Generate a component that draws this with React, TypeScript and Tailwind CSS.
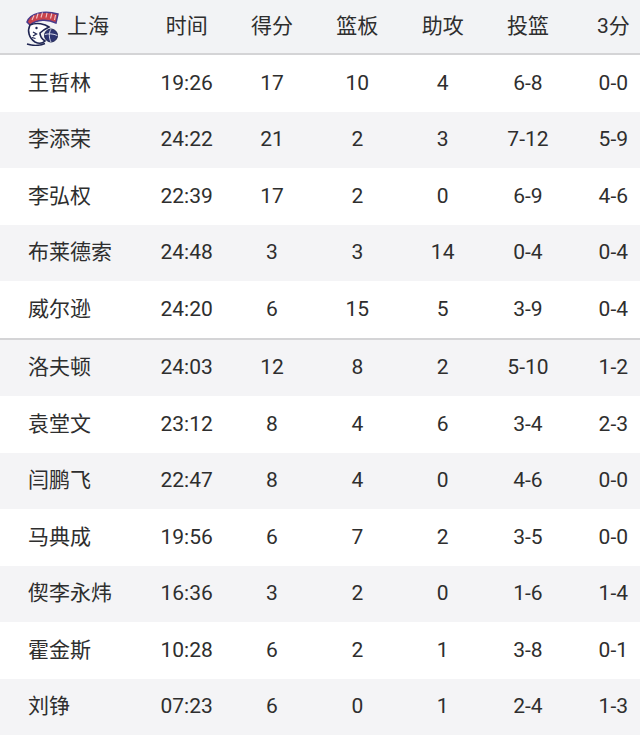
import React from "react";

type Row = [string, string, string, string, string, string, string];

const STARTERS: Row[] = [
  ["王哲林", "19:26", "17", "10", "4", "6-8", "0-0"],
  ["李添荣", "24:22", "21", "2", "3", "7-12", "5-9"],
  ["李弘权", "22:39", "17", "2", "0", "6-9", "4-6"],
  ["布莱德索", "24:48", "3", "3", "14", "0-4", "0-4"],
  ["威尔逊", "24:20", "6", "15", "5", "3-9", "0-4"],
];

const BENCH: Row[] = [
  ["洛夫顿", "24:03", "12", "8", "2", "5-10", "1-2"],
  ["袁堂文", "23:12", "8", "4", "6", "3-4", "2-3"],
  ["闫鹏飞", "22:47", "8", "4", "0", "4-6", "0-0"],
  ["马典成", "19:56", "6", "7", "2", "3-5", "0-0"],
  ["偰李永炜", "16:36", "3", "2", "0", "1-6", "1-4"],
  ["霍金斯", "10:28", "6", "2", "1", "3-8", "0-1"],
  ["刘铮", "07:23", "6", "0", "1", "2-4", "1-3"],
];

const HEADERS = ["时间", "得分", "篮板", "助攻", "投篮", "3分"];

const GRID = "grid grid-cols-[144px_repeat(6,85.33px)] w-[656px] items-center";

// Shanghai Sharks badge, rough drawing
function SharksLogo() {
  return (
    <svg width="36" height="38" viewBox="0 0 36 38">
      {/* red wordmark arc */}
      <path d="M3 14 C6 5 20 2 34 6 L32 15 C24 11 13 11 6 17 Z" fill="#c9434c" stroke="#4a3c8c" strokeWidth="1.5" />
      <path d="M8 12 L10 7.5 M12.5 10.5 L14 5.5 M17 9.5 L18.5 4.5 M22 9.5 L23 4.8 M26.5 10.5 L27.8 5.5 M30.5 12 L31.5 7" stroke="#f0c8cc" strokeWidth="1.1" />
      {/* shark head */}
      <path d="M6 17 C3 23 5 30 11 34 C15 36 19 35 21 33 C18 31 16 28 16 25 C18 23 21 21 25 19 C21 16 13 14 6 17 Z" fill="#ffffff" stroke="#1f2552" strokeWidth="1.6" />
      <path d="M9 24 L12.5 26 L9 28 M8 29.5 L11.5 30.5" stroke="#1f2552" strokeWidth="1.3" fill="none" />
      <circle cx="12.5" cy="20" r="1.2" fill="#1f2552" />
      {/* basketball */}
      <circle cx="27" cy="27.5" r="6.5" fill="#2d3470" stroke="#1f2552" strokeWidth="1" />
      <path d="M20.8 26.5 C24.5 25.5 29 25.5 33.3 27.5 M27 21.2 C24.8 24.5 24.8 30 27 34" stroke="#e8eaf5" strokeWidth="0.9" fill="none" />
      <path d="M3 36 C9 38 15 38 21 35.5" stroke="#1f2552" strokeWidth="1.4" fill="none" />
    </svg>
  );
}

function StatRow({ row, shaded }: { row: Row; shaded: boolean }) {
  return (
    <div className={`${GRID} h-[56.5px] ${shaded ? "bg-[#f4f4f6]" : "bg-white"}`}>
      <div className="pl-[28px]">{row[0]}</div>
      {row.slice(1).map((v, i) => (
        <div key={i} className="text-center">
          {v}
        </div>
      ))}
    </div>
  );
}

export default function App() {
  return (
    <div
      className="w-[640px] h-[744px] overflow-hidden bg-white text-[21px] text-[#2e2e2e] leading-none"
      style={{ fontFamily: 'Roboto, "Noto Sans CJK SC", sans-serif' }}
    >
      {/* Header */}
      <div className={`${GRID} h-[53px] bg-[#f2f3f5]`}>
        <div className="flex items-center gap-[7px] pl-[24px]">
          <SharksLogo />
          <span>上海</span>
        </div>
        {HEADERS.map((h) => (
          <div key={h} className="text-center">
            {h}
          </div>
        ))}
      </div>
      <div className="h-[2px] w-full bg-[#d4d4d6]" />

      {STARTERS.map((r, i) => (
        <StatRow key={r[0]} row={r} shaded={i % 2 === 1} />
      ))}
      <div className="h-[2px] w-full bg-[#d4d4d6]" />
      {BENCH.map((r, i) => (
        <StatRow key={r[0]} row={r} shaded={i % 2 === 0} />
      ))}
    </div>
  );
}
